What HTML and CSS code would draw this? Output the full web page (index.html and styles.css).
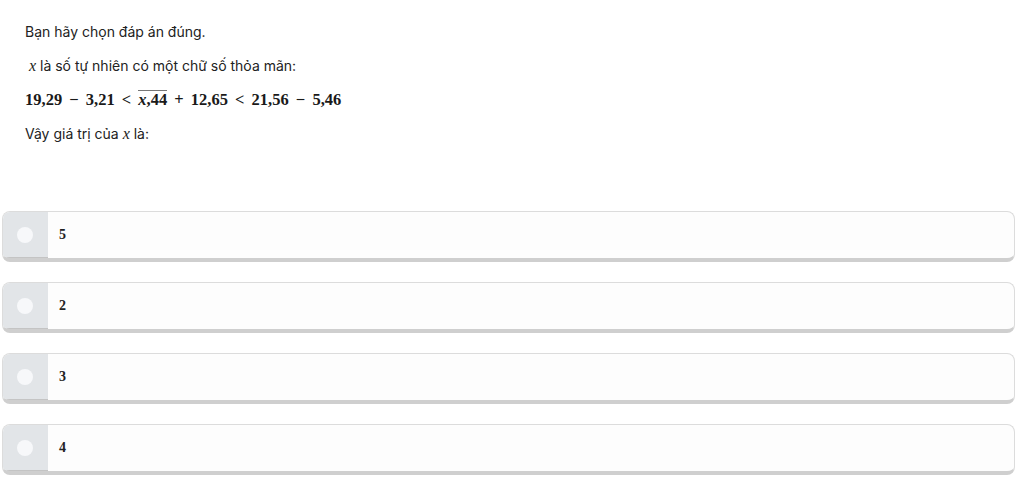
FILE: index.html
```html
<!DOCTYPE html>
<html lang="vi">
<head>
<meta charset="utf-8">
<link rel="stylesheet" href="styles.css">
</head>
<body>
<div class="page">
  <div class="question">
    <p class="line">Bạn hãy chọn đáp án đúng.</p>
    <p class="line">&nbsp;<span class="m mi">x</span> là số tự nhiên có một chữ số thỏa mãn:</p>
    <p class="line math"><span class="m">19,29 − 3,21 &lt; <span class="over"><span class="mi">x</span>,44</span> + 12,65 &lt; 21,56 − 5,46</span></p>
    <p class="line">Vậy giá trị của <span class="m mi">x</span> là:</p>
  </div>
  <div class="options">
    <div class="option"><div class="radio"><span class="dot"></span></div><div class="label">5</div></div>
    <div class="option"><div class="radio"><span class="dot"></span></div><div class="label">2</div></div>
    <div class="option"><div class="radio"><span class="dot"></span></div><div class="label">3</div></div>
    <div class="option"><div class="radio"><span class="dot"></span></div><div class="label">4</div></div>
  </div>
</div>
</body>
</html>
```
FILE: styles.css
```css
html, body { margin: 0; padding: 0; background: #fff; }
body { font-family: Inter, Roboto, "Liberation Sans", Arial, sans-serif; color: #222; }
.page { padding: 15px 9px 0 2px; }
.question { padding-left: 23px; }
.line { margin: 0; height: 34px; line-height: 34px; font-size: 14px; }
.m { font-family: "Liberation Serif", "DejaVu Serif", serif; font-size: 16px; }
.mi { font-style: italic; }
.math .m { font-size: 16.5px; font-weight: bold; color: #1a1a1a; word-spacing: 3px; }
.over { display: inline-block; border-top: 1px solid #777; line-height: 16px; padding-top: 1px; word-spacing: 0; }
.options { margin-top: 60px; display: flex; flex-direction: column; gap: 20px; }
.option {
  display: flex; height: 46px; border: 1px solid #dcdcdc; border-bottom: 4px solid #cfcfcf;
  border-radius: 8px; overflow: hidden; background: #fdfdfd;
}
.radio { width: 45px; background: #e2e5e8; display: flex; align-items: center; justify-content: center; box-shadow: inset 0 -1px 0 #c4c4c4; }
.dot { width: 16px; height: 16px; border-radius: 50%; background: #f7f8fa; margin-left: -2px; }
.label { padding-left: 11px; display: flex; align-items: center; font-family: "Liberation Serif", "DejaVu Serif", serif; font-size: 14px; font-weight: bold; color: #222; }
```
